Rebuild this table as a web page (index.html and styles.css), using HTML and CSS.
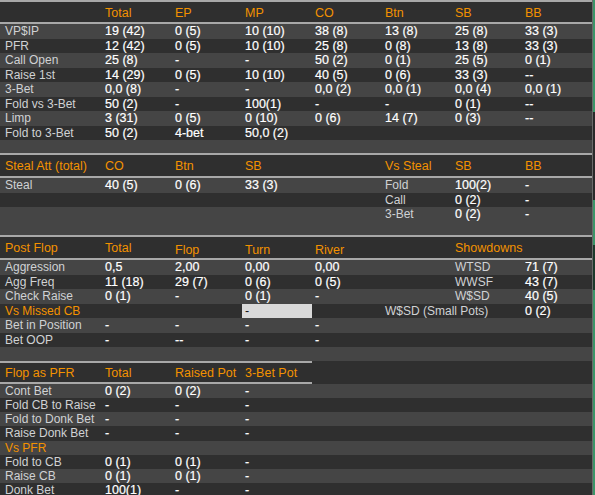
FILE: index.html
```html
<!DOCTYPE html>
<html>
<head>
<meta charset="utf-8">
<link rel="stylesheet" href="styles.css">
</head>
<body>
<div class="screen">
  <div class="panel">
    <div class="sep"></div>
    <div class="row head h20">
      <span></span><span class="hd">Total</span><span class="hd">EP</span><span class="hd">MP</span><span class="hd">CO</span><span class="hd">Btn</span><span class="hd">SB</span><span class="hd">BB</span>
    </div>
    <div class="sep"></div>
    <div class="rows s1">
      <div class="row"><span class="lb">VP$IP</span><span>19 (42)</span><span>0 (5)</span><span>10 (10)</span><span>38 (8)</span><span>13 (8)</span><span>25 (8)</span><span>33 (3)</span></div>
      <div class="row"><span class="lb">PFR</span><span>12 (42)</span><span>0 (5)</span><span>10 (10)</span><span>25 (8)</span><span>0 (8)</span><span>13 (8)</span><span>33 (3)</span></div>
      <div class="row"><span class="lb">Call Open</span><span>25 (8)</span><span>-</span><span>-</span><span>50 (2)</span><span>0 (1)</span><span>25 (5)</span><span>0 (1)</span></div>
      <div class="row"><span class="lb">Raise 1st</span><span>14 (29)</span><span>0 (5)</span><span>10 (10)</span><span>40 (5)</span><span>0 (6)</span><span>33 (3)</span><span>--</span></div>
      <div class="row"><span class="lb">3-Bet</span><span>0,0 (8)</span><span>-</span><span>-</span><span>0,0 (2)</span><span>0,0 (1)</span><span>0,0 (4)</span><span>0,0 (1)</span></div>
      <div class="row"><span class="lb">Fold vs 3-Bet</span><span>50 (2)</span><span>-</span><span>100(1)</span><span>-</span><span>-</span><span>0 (1)</span><span>--</span></div>
      <div class="row"><span class="lb">Limp</span><span>3 (31)</span><span>0 (5)</span><span>0 (10)</span><span>0 (6)</span><span>14 (7)</span><span>0 (3)</span><span>--</span></div>
      <div class="row"><span class="lb">Fold to 3-Bet</span><span>50 (2)</span><span>4-bet</span><span>50,0 (2)</span></div>
    </div>
    <div class="fill f1"></div>
    <div class="sep"></div>

    <div class="row head h21">
      <span class="hd">Steal Att (total)</span><span class="hd">CO</span><span class="hd">Btn</span><span class="hd">SB</span><span></span><span class="hd">Vs Steal</span><span class="hd">SB</span><span class="hd">BB</span>
    </div>
    <div class="sep"></div>
    <div class="rows s2">
      <div class="row"><span class="lb">Steal</span><span>40 (5)</span><span>0 (6)</span><span>33 (3)</span><span></span><span class="lb">Fold</span><span>100(2)</span><span>-</span></div>
      <div class="row"><span></span><span></span><span></span><span></span><span></span><span class="lb">Call</span><span>0 (2)</span><span>-</span></div>
      <div class="row"><span></span><span></span><span></span><span></span><span></span><span class="lb">3-Bet</span><span>0 (2)</span><span>-</span></div>
    </div>
    <div class="fill f2"></div>
    <div class="sep"></div>

    <div class="row head h21">
      <span class="hd">Post Flop</span><span class="hd">Total</span><span class="hd low">Flop</span><span class="hd low">Turn</span><span class="hd low">River</span><span></span><span class="hd">Showdowns</span><span></span>
    </div>
    <div class="sep"></div>
    <div class="rows s3">
      <div class="row"><span class="lb">Aggression</span><span>0,5</span><span>2,00</span><span>0,00</span><span>0,00</span><span></span><span class="lb">WTSD</span><span>71 (7)</span></div>
      <div class="row"><span class="lb">Agg Freq</span><span>11 (18)</span><span>29 (7)</span><span>0 (6)</span><span>0 (5)</span><span></span><span class="lb">WWSF</span><span>43 (7)</span></div>
      <div class="row"><span class="lb">Check Raise</span><span>0 (1)</span><span>-</span><span>0 (1)</span><span>-</span><span></span><span class="lb">W$SD</span><span>40 (5)</span></div>
      <div class="row"><span class="or">Vs Missed CB</span><span></span><span></span><span class="box">-</span><span></span><span class="lb wide">W$SD (Small Pots)</span><span>0 (2)</span></div>
      <div class="row"><span class="lb">Bet in Position</span><span>-</span><span>-</span><span>-</span><span>-</span></div>
      <div class="row"><span class="lb">Bet OOP</span><span>-</span><span>--</span><span>-</span><span>-</span></div>
    </div>
    <div class="fill f3"></div>

    <div class="headblock">
      <div class="sep short"></div>
      <div class="row head h19">
        <span class="hd">Flop as PFR</span><span class="hd">Total</span><span class="hd">Raised Pot</span><span class="hd">3-Bet Pot</span>
      </div>
      <div class="sep short"></div>
    </div>
    <div class="rows s4">
      <div class="row"><span class="lb">Cont Bet</span><span>0 (2)</span><span>0 (2)</span><span>-</span></div>
      <div class="row"><span class="lb">Fold CB to Raise</span><span>-</span><span>-</span><span>-</span></div>
      <div class="row"><span class="lb">Fold to Donk Bet</span><span>-</span><span>-</span><span>-</span></div>
      <div class="row"><span class="lb">Raise Donk Bet</span><span>-</span><span>-</span><span>-</span></div>
      <div class="row"><span class="or">Vs PFR</span></div>
      <div class="row"><span class="lb">Fold to CB</span><span>0 (1)</span><span>0 (1)</span><span>-</span></div>
      <div class="row"><span class="lb">Raise CB</span><span>0 (1)</span><span>0 (1)</span><span>-</span></div>
      <div class="row"><span class="lb">Donk Bet</span><span>100(1)</span><span>-</span><span>-</span></div>
    </div>
  </div>
  <div class="strip"></div>
</div>
</body>
</html>
```
FILE: styles.css
```css
* { box-sizing: border-box; }
body {
  margin: 0;
  background: #454545;
  font-family: "Liberation Sans", Arial, sans-serif;
  font-size: 12px;
}
.screen {
  display: flex;
  width: 595px;
  height: 495px;
  overflow: hidden;
}
.panel {
  width: 592px;
  flex: none;
  background: #454545;
}
.strip {
  width: 3px;
  flex: none;
  border-left: 1px solid #6a6a6a;
  background: linear-gradient(to bottom,
    #3c9468 0, #3c9468 112px,
    #2a2a2a 112px, #2a2a2a 200px,
    #3c9468 200px, #3c9468 245px,
    #1d3a2c 245px, #1d3a2c 290px,
    #3c9468 290px);
}
.sep {
  height: 2px;
  background: #a8a8a8;
}
.sep.short { width: 312px; }
.row {
  display: grid;
  grid-template-columns: 100px repeat(6, 70px) 1fr;
  padding-left: 5px;
  align-items: center;
  height: 14.5px;
  color: #ffffff;
  white-space: nowrap;
  line-height: 14px;
}
.row > span {
  font-size: 12.5px;
  -webkit-text-stroke: 0.2px #ffffff;
}
.row > span.lb,
.row > span.or,
.row > span.hd {
  font-size: 12px;
  -webkit-text-stroke: 0;
}
.head {
  background: #2f2f2f;
  color: #f39200;
}
.row > span.hd { font-size: 12.5px; }
.h20 { height: 20px; padding-top: 1px; }
.h21 { height: 21px; padding-top: 1px; }
.h19 { height: 19px; padding-top: 1px; }
.headblock { background: #2f2f2f; }
.hd { color: #f39200; }
.hd.low { padding-top: 3px; }
.rows .row:nth-child(even) { background: #2f2f2f; }
.s4 .row { height: 14.15px; }
.lb { color: #d0d2d4; }
.or { color: #f39200; }
.wide { grid-column: 6 / span 2; }
.row > span.box {
  align-self: stretch;
  margin-left: -3px;
  width: 70px;
  padding-left: 3px;
  background: #d9d9d9;
  color: #111111;
  -webkit-text-stroke: 0;
  display: flex;
  align-items: center;
}
.fill { background: #454545; }
.f1 { height: 13px; }
.f2 { height: 13.5px; }
.f3 { height: 14px; }
```
